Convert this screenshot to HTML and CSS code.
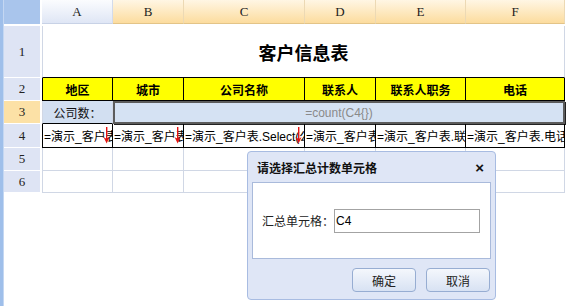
FILE: index.html
```html
<!DOCTYPE html>
<html lang="zh-CN">
<head>
  <meta charset="UTF-8" />
  <title>客户信息表</title>
  <link rel="stylesheet" href="styles.css">
</head>
<body>
  <div class="app">
    <div class="stripe"></div>
    <div class="sheet">
      <div class="corner"></div>
      <div class="col-head">A</div>
      <div class="col-head sel">B</div>
      <div class="col-head sel">C</div>
      <div class="col-head sel">D</div>
      <div class="col-head sel">E</div>
      <div class="col-head sel">F</div>

      <div class="row-head row-1">1</div>
      <div class="cell first title-cell">客户信息表</div>

      <div class="row-head">2</div>
      <div class="cell first head-cell">地区</div>
      <div class="cell head-cell">城市</div>
      <div class="cell head-cell">公司名称</div>
      <div class="cell head-cell">联系人</div>
      <div class="cell head-cell">联系人职务</div>
      <div class="cell head-cell">电话</div>

      <div class="row-head sel">3</div>
      <div class="cell first label-cell">公司数：</div>
      <div class="cell merged-cell">=count(C4{})</div>

      <div class="row-head">4</div>
      <div class="cell first field-cell"><span class="field-text">=演示_客户表.Select(地区)</span>
        <svg class="arrow" width="7" height="17" viewBox="0 0 7 17"><rect x="3" y="0" width="1.4" height="13" fill="#e31313"/><path d="M0.5 10 L3.7 16.5 L6.5 10 L3.7 12 Z" fill="#e31313"/></svg>
      </div>
      <div class="cell field-cell"><span class="field-text">=演示_客户表.Select(城市)</span>
        <svg class="arrow" width="7" height="17" viewBox="0 0 7 17"><rect x="3" y="0" width="1.4" height="13" fill="#e31313"/><path d="M0.5 10 L3.7 16.5 L6.5 10 L3.7 12 Z" fill="#e31313"/></svg>
      </div>
      <div class="cell field-cell"><span class="field-text">=演示_客户表.Select(公司名称)</span>
        <svg class="arrow" width="7" height="17" viewBox="0 0 7 17"><rect x="3" y="0" width="1.4" height="13" fill="#e31313"/><path d="M0.5 10 L3.7 16.5 L6.5 10 L3.7 12 Z" fill="#e31313"/></svg>
      </div>
      <div class="cell field-cell"><span class="field-text">=演示_客户表.联系人</span></div>
      <div class="cell field-cell"><span class="field-text">=演示_客户表.联系人职务</span></div>
      <div class="cell field-cell"><span class="field-text">=演示_客户表.电话</span></div>

      <div class="row-head">5</div>
      <div class="cell first"></div>
      <div class="cell"></div>
      <div class="cell"></div>
      <div class="cell"></div>
      <div class="cell"></div>
      <div class="cell"></div>

      <div class="row-head">6</div>
      <div class="cell first"></div>
      <div class="cell"></div>
      <div class="cell"></div>
      <div class="cell"></div>
      <div class="cell"></div>
      <div class="cell"></div>
    </div>
  </div>

  <div class="dialog">
    <div class="dialog-title">
      <span>请选择汇总计数单元格</span>
      <span class="close">×</span>
    </div>
    <div class="dialog-body">
      <label for="cellInput">汇总单元格：</label>
      <input type="text" id="cellInput" value="C4">
    </div>
    <div class="dialog-foot">
      <button class="btn">确定</button>
      <button class="btn">取消</button>
    </div>
  </div>
</body>
</html>
```

FILE: styles.css
```css
* {
  margin: 0;
  padding: 0;
  box-sizing: border-box;
}

body {
  font-family: 'Liberation Sans', 'Noto Sans CJK SC', sans-serif;
  font-size: 12px;
  color: #000;
  background-color: #ffffff;
  width: 574px;
  height: 306px;
  overflow: hidden;
}

.app {
  display: flex;
  height: 306px;
}

.stripe {
  width: 4px;
  background: linear-gradient(to right, #9fbfea 75%, #c4d7f2 75%);
}

.sheet {
  display: grid;
  grid-template-columns: 38px 71px 71px 121px 71px 90px 99px;
  grid-template-rows: 26px 52px 23px 23px 24px 23px 22px;
  align-self: flex-start;
}

.corner {
  background-color: #a9c5ec;
  margin: 0 2px 2px 0;
}

.col-head {
  margin-bottom: 2px;
  display: flex;
  align-items: center;
  justify-content: center;
  font-family: 'Liberation Serif', serif;
  font-size: 13px;
  color: #222;
  background: linear-gradient(to bottom, #fbfcfe, #dfe6f5);
  border-right: 1px solid #d3dbeb;
  border-bottom: 1px solid #c8d2e6;
}

.col-head.sel {
  background: linear-gradient(to bottom, #fff6e4, #fcdc9e);
  border-right: 1px solid #ecd9b4;
  border-bottom: 1px solid #e3c488;
}

.row-head {
  margin-right: 2px;
  display: flex;
  align-items: center;
  justify-content: center;
  font-family: 'Liberation Serif', serif;
  font-size: 13px;
  color: #222;
  background-color: #dee4f4;
  border-bottom: 1px solid #ffffff;
}

.row-head.sel {
  background-color: #fce1a6;
}

.cell {
  display: flex;
  align-items: center;
  position: relative;
  overflow: hidden;
  white-space: nowrap;
  border-right: 1px solid #d0d7e5;
  border-bottom: 1px solid #d0d7e5;
}

.cell.first {
  border-left: 1px solid #d0d7e5;
}

.title-cell {
  grid-column: span 6;
  justify-content: center;
  font-size: 18px;
  font-weight: bold;
  border-bottom-color: #000;
}

.head-cell {
  justify-content: center;
  font-weight: bold;
  background-color: #ffff00;
  border-right-color: #000;
  border-bottom-color: #000;
}

.head-cell.first {
  border-left-color: #000;
}

.label-cell {
  justify-content: center;
  background-color: #d2dff1;
  border-left-color: #000;
  border-bottom-color: #000;
  color: #111;
}

.merged-cell {
  grid-column: span 5;
  justify-content: center;
  background-color: #d5e2f3;
  color: #8a8a8a;
  border: 2px solid #5c5c5c;
  box-shadow: 1px 1px 0 #222;
}

.field-cell {
  padding-left: 1px;
  border-right-color: #000;
  border-bottom-color: #000;
}

.field-cell.first {
  border-left-color: #000;
}

.field-text {
  overflow: hidden;
  min-width: 0;
}

.arrow {
  position: absolute;
  display: block;
  right: 2px;
  top: 3px;
  z-index: 1;
}

.dialog {
  position: absolute;
  left: 247px;
  top: 151px;
  width: 249px;
  height: 149px;
  background-color: #dfe6f6;
  border: 1px solid #a8bce2;
  border-radius: 4px;
  padding: 0 4px;
  display: flex;
  flex-direction: column;
}

.dialog-title {
  height: 30px;
  display: flex;
  align-items: center;
  justify-content: space-between;
  padding: 0 7px 0 5px;
  font-weight: bold;
  color: #111;
}

.close {
  font-family: 'Liberation Sans', sans-serif;
  font-size: 15px;
}

.dialog-body {
  height: 77px;
  background-color: #ffffff;
  border: 1px solid #a9badb;
  display: flex;
  align-items: center;
  padding-left: 9px;
  color: #222;
}

.dialog-body input {
  width: 146px;
  height: 24px;
  border: 1px solid #a3a3a3;
  padding-left: 1px;
  font-family: 'Liberation Sans', sans-serif;
  font-size: 12px;
  color: #000;
  outline: none;
}

.dialog-foot {
  display: flex;
  justify-content: flex-end;
  gap: 10px;
  padding-top: 9px;
  padding-right: 1px;
}

.btn {
  width: 64px;
  height: 24px;
  border: 1px solid #97add2;
  border-radius: 4px;
  background: linear-gradient(to bottom, #f4f7fc, #d8e2f3);
  font-family: 'Liberation Sans', 'Noto Sans CJK SC', sans-serif;
  font-size: 12px;
  color: #222;
}
```
